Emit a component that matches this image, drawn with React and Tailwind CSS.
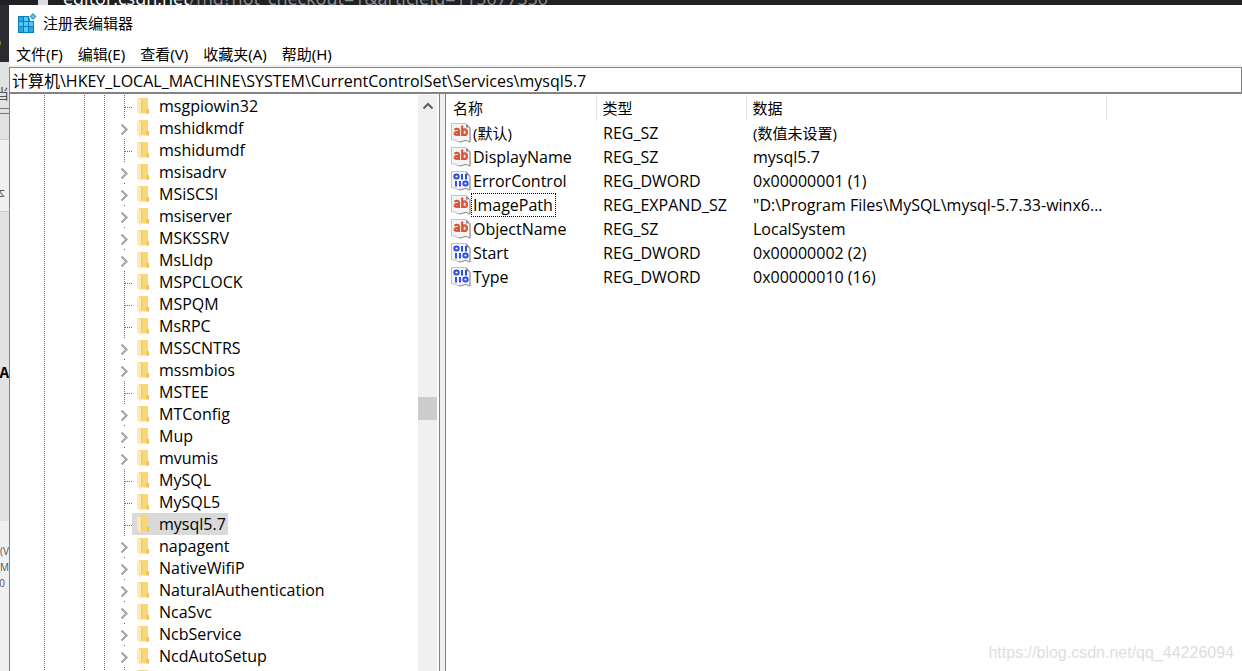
import React, { useState } from "react";

const MENUS = ["文件(F)", "编辑(E)", "查看(V)", "收藏夹(A)", "帮助(H)"];

const KEYS = [
  { name: "msgpiowin32" },
  { name: "mshidkmdf", children: true },
  { name: "mshidumdf" },
  { name: "msisadrv", children: true },
  { name: "MSiSCSI", children: true },
  { name: "msiserver", children: true },
  { name: "MSKSSRV", children: true },
  { name: "MsLldp", children: true },
  { name: "MSPCLOCK" },
  { name: "MSPQM" },
  { name: "MsRPC" },
  { name: "MSSCNTRS", children: true },
  { name: "mssmbios", children: true },
  { name: "MSTEE" },
  { name: "MTConfig", children: true },
  { name: "Mup", children: true },
  { name: "mvumis", children: true },
  { name: "MySQL" },
  { name: "MySQL5" },
  { name: "mysql5.7" },
  { name: "napagent", children: true },
  { name: "NativeWifiP", children: true },
  { name: "NaturalAuthentication", children: true },
  { name: "NcaSvc", children: true },
  { name: "NcbService", children: true },
  { name: "NcdAutoSetup", children: true },
  { name: "ndfltr" },
];

const VALUES = [
  { name: "(默认)", type: "REG_SZ", data: "(数值未设置)", cjk: true },
  { name: "DisplayName", type: "REG_SZ", data: "mysql5.7" },
  { name: "ErrorControl", type: "REG_DWORD", data: "0x00000001 (1)" },
  { name: "ImagePath", type: "REG_EXPAND_SZ", data: '"D:\\Program Files\\MySQL\\mysql-5.7.33-winx6...' },
  { name: "ObjectName", type: "REG_SZ", data: "LocalSystem" },
  { name: "Start", type: "REG_DWORD", data: "0x00000002 (2)" },
  { name: "Type", type: "REG_DWORD", data: "0x00000010 (16)" },
];

const RegeditIcon = () => (
  <svg width="20" height="20" viewBox="0 0 20 20" aria-hidden="true">
    <path d="M1 3h11l1 5h4v12H1z" fill="#0b7fb9" />
    <path d="M2 4h4v4H2zM2 14h4v5H2zM12 14h4v5h-4z" fill="#2ba6de" />
    <path d="M7 4h4v4H7zM2 9h4v4H2zM7 9h4v4H7zM7 14h4v5H7zM12 9h4v4h-4z" fill="#4fc9f5" />
    <path d="M16 0l3.500 3.500L16 7l-3.500-3.500z" fill="#3f9fcb" />
    <path d="M16 2l1.500 1.500L16 5l-1.500-1.500z" fill="#7cc8e6" />
  </svg>
);

const FolderIcon = () => (
  <svg className="shrink-0" width="13" height="17" viewBox="0 0 13 17" aria-hidden="true">
    <path d="M1 0h10v11l1 .500v4H1z" fill="#f9d778" />
    <path d="M9.500 11h2.500v4.500H9.500z" fill="#eec35c" />
    <path d="M0 0l4 1.500v15l-1 .500-3-3z" fill="#ffeab0" />
    <path d="M4.500 2v13" stroke="#f0c862" />
  </svg>
);

const ValueIcon = ({ type }) => (
  <svg className="shrink-0" width="20" height="20" viewBox="0 0 20 20" aria-hidden="true">
    <path d="M.5.500h14.500l4 4v14.500c-2 0-3-2-5-1.500s-4 2-6.500 1-4-2-7-1.500z" fill="#f5f5f5" stroke="#c2c2c2" />
    <path d="M19 4.500V19c-2 0-3-2-5-1.500s-4 2-6.500 1" fill="none" stroke="#8f8f8f" />
    <path d="M15 .500v4h4z" fill="#8c8c8c" />
    {type === "REG_DWORD" ? (
      <g fill="none" stroke="#2c50d8" strokeWidth="2">
        <ellipse cx="5.500" cy="5.500" rx="2.200" ry="1.900" />
        <path d="M11 3v5.500M15 3v5.500M5 10v5.500M9 10v5.500" />
        <ellipse cx="14.500" cy="12.500" rx="2.200" ry="1.900" />
      </g>
    ) : (
      <g fill="none" stroke="#dc5335" strokeWidth="2.200">
        <path d="M3.500 6.500C6 5.200 8 5.700 8 7.800V13M8 9C5 8.800 3.600 9.400 3.600 10.700 3.600 12.400 7 12.300 8 10.500M11.200 2.500V13" />
        <ellipse cx="13.600" cy="9.200" rx="2.300" ry="2.800" />
      </g>
    )}
  </svg>
);

const TreeGuides = ({ expandable }) => (
  <svg className="shrink-0" width="122" height="22" viewBox="0 0 122 22" aria-hidden="true">
    <path d="M34.500 0v22M74.500 0v22M94.500 0v22" stroke="#6e6e6e" strokeDasharray="1 1" />
    {expandable ? (
      <>
        <path d="M111.500 7.500l5 5-5 5" fill="none" stroke="#a6a6a6" strokeWidth="2.200" />
        <path d="M114.500 0v2" stroke="#6e6e6e" strokeDasharray="1 1" />
      </>
    ) : (
      <path d="M114.500 0v22M115 12.500h7" stroke="#6e6e6e" strokeDasharray="1 1" />
    )}
  </svg>
);

const TreeRow = ({ item, selected, onSelect }) => (
  <li className="flex h-[22px]">
    <TreeGuides expandable={item.children} />
    <button onClick={onSelect} className={`flex items-center pl-[5px] pr-[2px] ${selected ? "bg-[#d9d9d9]" : ""}`}>
      <FolderIcon />
      <span className="ml-[9px] leading-[22px]">{item.name}</span>
    </button>
  </li>
);

// strip of the browser window that shows to the left of the editor
const Behind = () => (
  <div className="flex w-[9px] shrink-0 flex-col overflow-hidden whitespace-nowrap bg-[#e2e2e2] text-[12px] leading-4 text-[#555]">
    <div className="h-[57px] shrink-0 bg-[#2b2c30] pt-9"><div className="h-1 w-px bg-[#8a7434]" /></div>
    <div className="flex h-[77px] shrink-0 flex-col items-end pt-[22px] text-[14px] leading-5">
      <span>当</span>
      <span className="mt-1 h-[6px] w-full border-y border-[#777]" />
    </div>
    <div className="flex h-[73px] shrink-0 flex-col items-end border-y border-[#ccc] bg-[#f0f0f0] pr-1 pt-[46px]">本</div>
    <div className="flex h-[309px] shrink-0 flex-col items-end pt-[154px] font-['Liberation_Mono'] text-[16px] font-bold text-black">CA</div>
    <div className="flex grow flex-col items-end bg-[#f0f0f0] pt-[22px] text-[10px]"><span>看(V</span><span>_M</span><span className="pr-1">0</span></div>
  </div>
);

const App = () => {
  const [selectedKey, setSelectedKey] = useState("mysql5.7");
  const [path, setPath] = useState("计算机\\HKEY_LOCAL_MACHINE\\SYSTEM\\CurrentControlSet\\Services\\mysql5.7");

  return (
    <div className="flex h-screen flex-col overflow-hidden bg-white font-['Open_Sans','Noto_Sans_CJK_SC',sans-serif] text-[16px] text-black">
      <div className="flex h-[5px] shrink-0 items-end gap-[15px] overflow-hidden bg-[#202124] pl-[38px] text-[18px] leading-[14px] text-[#8e9093]">
        <span className="h-[5px] w-[10px] bg-[#dcdcdc]" />
        <span className="whitespace-nowrap"><span className="text-white">editor.csdn.net</span>/md?not_checkout=1&amp;articleId=115077550</span>
      </div>

      <div className="flex min-h-0 grow">
        <Behind />
        <main className="flex min-w-0 grow flex-col">
          <header className="flex h-9 shrink-0 items-center gap-[6px] pl-2">
            <RegeditIcon />
            <h1 className="text-[15px]">注册表编辑器</h1>
          </header>
          <nav className="flex h-[26px] shrink-0 items-center gap-[15px] border-b-2 border-[#f0f0f0] pl-[7px] pt-[2px] font-['Noto_Sans','Noto_Sans_CJK_SC',sans-serif] text-[15px]">
            {MENUS.map((m) => (
              <button key={m}>{m}</button>
            ))}
          </nav>
          <input
            aria-label="地址"
            value={path}
            onChange={(e) => setPath(e.target.value)}
            className="h-[27px] shrink-0 border border-b-2 border-[#828287] pb-px pl-[2px] outline-none"
          />

          <div className="flex min-h-0 grow bg-[#f0f0f0]">
            <div className="flex w-[431px] shrink-0 border-x border-[#828287] bg-white">
              <ul className="min-w-0 grow overflow-hidden pt-px">
                {KEYS.map((k) => (
                  <TreeRow key={k.name} item={k} selected={k.name === selectedKey} onSelect={() => setSelectedKey(k.name)} />
                ))}
              </ul>
              <div className="mr-[2px] mt-px flex w-[19px] shrink-0 flex-col bg-[#f0f0f0]">
                <button aria-label="向上滚动" className="flex h-[22px] items-center justify-center">
                  <svg width="12" height="8" viewBox="0 0 12 8"><path d="M1.500 6.500L6 2l4.500 4.500" fill="none" stroke="#606060" strokeWidth="2" /></svg>
                </button>
                <div className="mt-[280px] h-[23px] bg-[#cdcdcd]" />
              </div>
            </div>

            <div className="ml-[5px] min-w-0 grow border-l border-[#828287] bg-white pt-px">
              <table className="w-[661px] table-fixed border-collapse text-left">
                <thead>
                  <tr className="h-[26px] text-[15px]">
                    <th className="w-[150px] border-r border-[#e5e5e5] p-0 pl-[7px] font-normal leading-5">名称</th>
                    <th className="w-[150px] border-r border-[#e5e5e5] p-0 pl-[6px] font-normal leading-5">类型</th>
                    <th className="border-r border-[#e5e5e5] p-0 pl-[6px] font-normal leading-5">数据</th>
                  </tr>
                </thead>
                <tbody>
                  {VALUES.map((v) => (
                    <tr key={v.name} className="h-6 whitespace-nowrap">
                      <td className="p-0 pl-[5px]">
                        <div className="flex h-6 items-center">
                          <ValueIcon type={v.type} />
                          <span className={`border border-dotted pl-px pr-[2px] leading-[22px] ${v.cjk ? "text-[15px]" : ""} ${v.name === "ImagePath" ? "border-black" : "border-transparent"}`}>{v.name}</span>
                        </div>
                      </td>
                      <td className="p-0 pl-[7px] leading-6">{v.type}</td>
                      <td className={`p-0 pl-[7px] leading-6 ${v.cjk ? "text-[15px]" : ""}`}>{v.data}</td>
                    </tr>
                  ))}
                </tbody>
              </table>
            </div>
          </div>
        </main>
      </div>
      <div className="pointer-events-none absolute bottom-2 right-2 font-['Liberation_Sans',sans-serif] text-[16px] leading-5 text-[#dedede]">https://blog.csdn.net/qq_44226094</div>
    </div>
  );
};

export default App;
